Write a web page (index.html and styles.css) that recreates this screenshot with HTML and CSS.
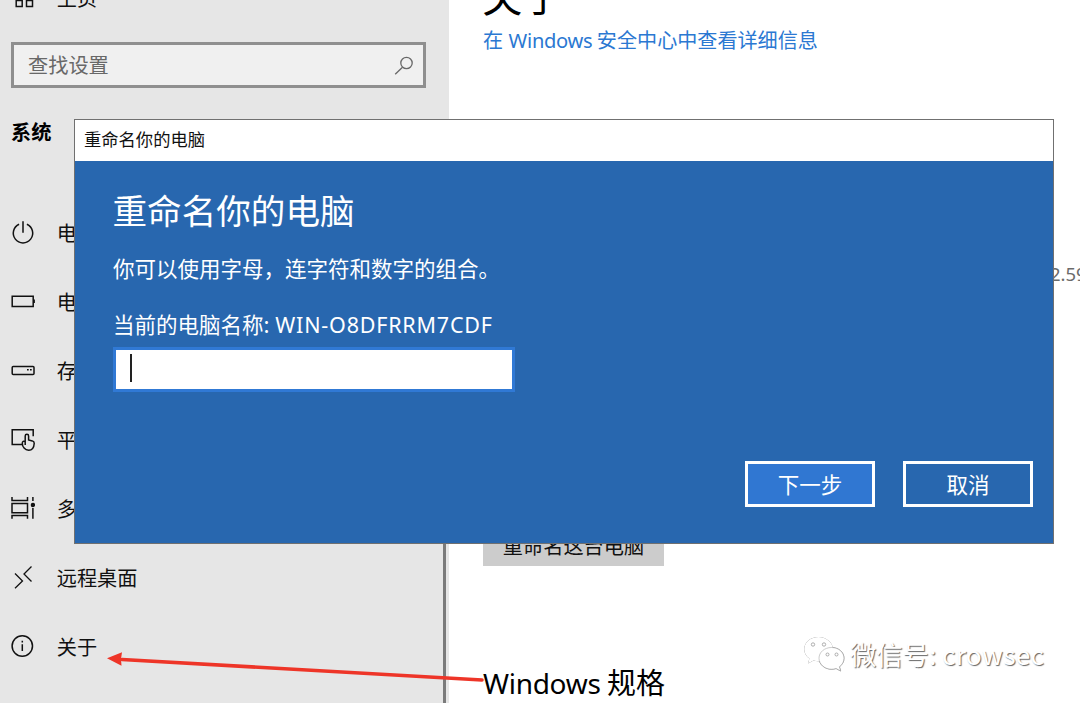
FILE: index.html
```html
<!DOCTYPE html>
<html lang="zh-CN">
<head>
<meta charset="utf-8">
<title>设置</title>
<link rel="stylesheet" href="styles.css">
</head>
<body>
<div class="screen">
  <aside class="sidebar">
    <div class="home nav-item">
      <svg class="icon" viewBox="0 0 24 24"><path d="M5.200 15.500h6v6h-6zM15.500 15.500h6v6h-6z"/></svg>
      <span>主页</span>
    </div>
    <div class="search">
      <span>查找设置</span>
      <svg class="search-icon" viewBox="0 0 20 20"><circle cx="12.500" cy="7" r="5.700"/><path d="M8.500 11.200L1.200 18.300"/></svg>
    </div>
    <h2 class="group">系统</h2>
    <nav class="nav">
      <div class="nav-item"><svg class="icon" viewBox="0 0 24 24"><path d="M8.100 3.300A9.700 9.700 0 1 0 15.900 3.300M12 .2v11.500"/></svg><span>电</span></div>
      <div class="nav-item"><svg class="icon" viewBox="0 0 24 24"><path d="M1.200 6.200h21v10.300h-21z"/><path class="solid" d="M22 9.500h1.900v3.500h-1.900z"/></svg><span>电</span></div>
      <div class="nav-item"><svg class="icon" viewBox="0 0 24 24"><rect x="1.200" y="7.600" width="21.800" height="7.800" rx="1"/><path d="M16 10.700h1.700M19 10.700h1.700"/></svg><span>存</span></div>
      <div class="nav-item"><svg class="icon" viewBox="0 0 24 24"><path d="M11 16.500H1.200V1.700h21v6.500"/><path d="M14.200 17V8c0-2.300 3.400-2.300 3.400 0v4l3.700.9c1.400.4 2 1.200 1.900 2.600-.2 3.400-1.700 6.700-5.500 6.700-3.800 0-6.400-3.300-6.400-7 0-1.900 1.300-2.600 2.900-1.500"/></svg><span>平</span></div>
      <div class="nav-item"><svg class="icon" viewBox="0 0 24 24"><path d="M1 0v3.500h15.500V0M1 6.500h15.500v9.200H1zM1 21.800v-3.200h15.500v3.200M21.900 0v4M21.900 11v10.800"/><circle class="solid" cx="21.900" cy="8" r="2.200"/></svg><span>多</span></div>
      <div class="nav-item"><svg class="icon thin" viewBox="0 0 24 24"><path d="M4 7.500l7.500 7.500L4 22.300M20.500 .5L13 8l7.500 7.500"/></svg><span>远程桌面</span></div>
      <div class="nav-item"><svg class="icon" viewBox="0 0 24 24"><circle cx="11.300" cy="11" r="10.200"/><path d="M11.300 9.300v6.800M11.300 5.800v1.700"/></svg><span>关于</span></div>
    </nav>
  </aside>
  <main class="content">
    <h1 class="page-title">关于</h1>
    <a class="link">在 <span class="latin">Windows</span> 安全中心中查看详细信息</a>
    <div class="cpu">2.59</div>
    <button class="rename">重命名这台电脑</button>
    <h2 class="spec"><span class="latin">Windows</span> 规格</h2>
  </main>

  <section class="dialog">
    <header class="titlebar">重命名你的电脑</header>
    <div class="dialog-body">
      <h2 class="dialog-title">重命名你的电脑</h2>
      <p class="hint">你可以使用字母，连字符和数字的组合。</p>
      <p class="current">当前的电脑名称: <span class="pc-name">WIN-O8DFRRM7CDF</span></p>
      <div class="field"><i class="caret"></i></div>
      <div class="actions">
        <button class="btn primary">下一步</button>
        <button class="btn">取消</button>
      </div>
    </div>
  </section>

  <svg class="arrow" viewBox="0 0 380 40"><path class="shaft" d="M15 13.500L375 34"/><path class="head" d="M0 12.300L15 6.200L14 13L14.500 19.700z"/></svg>

  <div class="watermark">
    <svg class="wechat" viewBox="0 0 42 38">
      <path d="M15.500 1C7.500 1 1.200 6.300 1.200 13.200c0 4 2 7.200 5.200 9.400L5 27.500l5.500-3c1.700.5 3.500.8 5.500.7 8-.2 14-5.500 14-12S23.500 1 15.500 1z"/>
      <path class="front" d="M28.500 11.500c-7 0-12.500 4.700-12.500 10.700s5.500 11 12.500 11c1.700 0 3.200-.2 4.600-.7l4.600 2.500-1.300-4.200c2.700-2 4.600-5 4.600-8.600 0-6-5.500-10.700-12.500-10.700z"/>
      <g class="eye"><circle cx="10" cy="8.500" r="1.700"/><circle cx="21" cy="8.500" r="1.700"/><circle cx="24.500" cy="18.500" r="1.500"/><circle cx="33.500" cy="18.500" r="1.500"/></g>
    </svg>
    <span>微信号: <span class="account">crowsec</span></span>
  </div>
</div>
</body>
</html>
```

FILE: styles.css
```css
* { box-sizing: border-box; }
body { margin: 0; font-family: "Noto Sans CJK SC", sans-serif; color: #111; }
h1, h2, p { margin: 0; font-weight: 400; }
button { font: inherit; padding: 0; border: 0; color: inherit; }
.screen { position: relative; display: flex; width: 1080px; height: 703px; overflow: hidden; background: #fff; }
.latin, .pc-name { font-family: "Noto Sans", sans-serif; }

.sidebar { width: 449px; flex: none; background: linear-gradient(#7b7b7b, #7b7b7b) 443px 544px / 3px 159px no-repeat #e6e6e6; display: flex; flex-direction: column; }
.nav-item { display: flex; align-items: center; gap: 21.700px; height: 69px; padding-left: 11px; font-size: 20.200px; white-space: nowrap; }
.icon { width: 24px; height: 24px; flex: none; fill: none; stroke: #111; stroke-width: 1.500; }
.icon.thin { stroke-width: 1.300; }
.solid { fill: #111; stroke: none; }
.home { height: 30px; margin-top: -18px; }
.search { display: flex; align-items: center; justify-content: space-between; width: 415px; height: 46px; margin: 30px 0 0 11px; padding: 0 9px 2px 14px; border: 3px solid #8f8f8f; background: #f0f0f0; color: #686868; font-size: 20.200px; }
.search-icon { width: 20px; height: 20px; margin-top: 3px; fill: none; stroke: #686868; stroke-width: 1.300; }
.group { height: 30px; margin: 29px 0 0 11px; font-size: 20.200px; line-height: 30px; font-weight: 700; color: #000; }
.nav { margin-top: 51px; }

.content { flex: 1; display: flex; flex-direction: column; align-items: flex-start; padding-left: 34px; }
.page-title { height: 60px; margin-top: -35px; font-size: 40.500px; line-height: 60px; color: #000; text-indent: -1px; }
.link { height: 30px; line-height: 29px; font-size: 20.100px; color: #2b78d2; white-space: nowrap; }
.link .latin { margin-left: 1px; letter-spacing: -.3px; }
.cpu { align-self: flex-end; width: 30px; height: 30px; margin-top: 204px; font: 18.500px/30px "Noto Sans", sans-serif; color: #6b6b6b; white-space: nowrap; }
.rename { width: 181px; height: 46px; margin-top: 235px; background: #ccc; font-size: 20.200px; color: #111; }
.spec { height: 44px; margin-top: 93px; font-size: 29px; line-height: 44px; white-space: nowrap; color: #000; }
.spec .latin { font-size: 28px; letter-spacing: -.3px; }

.dialog { position: absolute; left: 73.500px; top: 119px; width: 980.500px; height: 425px; border: 1px solid #707070; display: flex; flex-direction: column; }
.titlebar { height: 40.500px; padding-left: 9.500px; background: #fff; font-size: 17.300px; line-height: 38px; }
.dialog-body { flex: 1; display: flex; flex-direction: column; padding: 23.500px 20px 0 38.500px; background: #2867af; color: #fff; }
.dialog-title { height: 50px; margin-left: -.5px; font-size: 34.600px; line-height: 50px; }
.hint { height: 32px; margin-top: 18px; font-size: 21.500px; line-height: 32px; }
.current { height: 32px; margin-top: 24px; font-size: 21.500px; line-height: 32px; white-space: nowrap; }
.pc-name { margin-left: 1px; letter-spacing: .8px; }
.field { width: 402px; height: 45px; margin-top: 7px; padding: 4px 0 0 14px; border: 3px solid #3079d5; background: #fff; }
.caret { display: block; width: 2px; height: 28px; background: #222; }
.actions { display: flex; justify-content: flex-end; gap: 28px; margin-top: 69px; }
.btn { width: 130px; height: 46px; padding-bottom: 2px; border: 3px solid #fff; background: transparent; font-size: 21.500px; }
.primary { background: #3077d2; }

.arrow { position: absolute; left: 107px; top: 646px; width: 380px; height: 40px; }
.shaft { stroke: #ee3528; stroke-width: 3.600; fill: none; stroke-linecap: round; }
.head { fill: #ee3528; }
.watermark { position: absolute; left: 803px; top: 636px; display: flex; align-items: center; gap: 5px; height: 38px; font-size: 26.300px; color: #fff; white-space: nowrap; text-shadow: 1px 1px 1px #666; }
.watermark span { margin-top: -3px; }
.account { letter-spacing: .2px; }
.wechat { width: 42px; height: 38px; fill: #fff; filter: drop-shadow(.6px .8px .5px #666); }
.front { stroke: #aaa; stroke-width: .6; }
.eye { fill: #fff; stroke: #999; stroke-width: .8; }
```
